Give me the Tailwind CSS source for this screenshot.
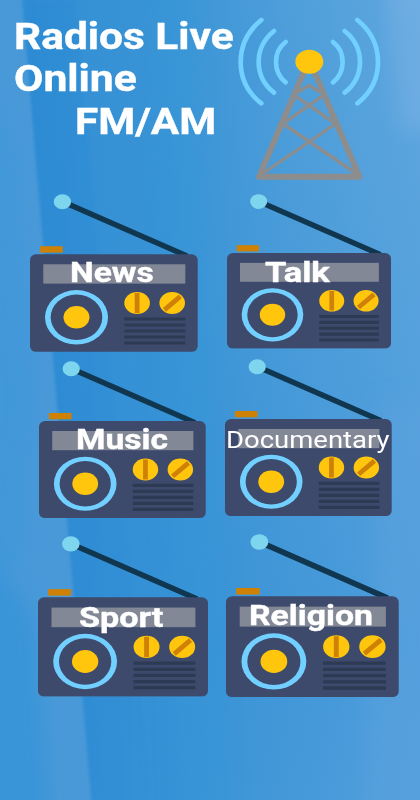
<!DOCTYPE html>
<html lang="en">
<head>
    <meta charset="UTF-8">
    <meta name="viewport" content="width=device-width, initial-scale=1.0">
    <title>Radios Live Online FM/AM</title>
    <script src="https://cdn.jsdelivr.net/npm/@tailwindcss/browser@4"></script>
</head>
<body class="font-['Roboto',sans-serif] bg-[#3f96d6] text-white">
    <div class="relative w-[420px] h-[800px] overflow-hidden">

        <!-- Painted background -->
        <svg class="absolute inset-0" width="420" height="800" viewBox="0 0 420 800" aria-hidden="true">
            <defs>
                <linearGradient id="base" x1="0" y1="0" x2="1" y2="0">
                    <stop offset="0" stop-color="#4b9bd9"/>
                    <stop offset=".07" stop-color="#338fd4"/>
                    <stop offset=".4" stop-color="#3a94d6"/>
                    <stop offset=".7" stop-color="#4f9fda"/>
                    <stop offset="1" stop-color="#60a7df"/>
                </linearGradient>
                <linearGradient id="low" x1="0" y1="0" x2="0" y2="1">
                    <stop offset="0" stop-color="#2e8bd4" stop-opacity="0"/>
                    <stop offset=".8" stop-color="#2e8bd4" stop-opacity=".4"/>
                    <stop offset="1" stop-color="#2e8bd4" stop-opacity=".3"/>
                </linearGradient>
                <linearGradient id="edge" x1="0" y1="0" x2="1" y2="0">
                    <stop offset="0" stop-color="#2487d3"/>
                    <stop offset="1" stop-color="#2487d3" stop-opacity="0"/>
                </linearGradient>
                <filter id="soft"><feGaussianBlur stdDeviation="10"/></filter>
                <filter id="fine"><feGaussianBlur stdDeviation="1.5"/></filter>
            </defs>
            <rect width="420" height="800" fill="url(#base)"/>
            <rect width="420" height="800" fill="url(#low)"/>
            <path d="M150 -20H190L235 820H175Z" fill="#3598d8" opacity=".35" filter="url(#soft)"/>
            <path d="M385 -20H440V130H400Z" fill="#76b0e3" opacity=".6" filter="url(#soft)"/>
            <path d="M380 400H440V820H360Z" fill="#5ca2de" opacity=".5" filter="url(#soft)"/>
            <path d="M20 0H75L150 800H92Z" fill="url(#edge)" opacity=".45" filter="url(#fine)"/>
            <path d="M-10 -10H21L92 810H-10Z" fill="#4899d8" filter="url(#fine)"/>
            <path d="M-20 60L14 150L34 400L20 560L-20 600Z" fill="#3f98da" opacity=".8" filter="url(#soft)"/>
            <path d="M-20 540L35 620L50 820H-20Z" fill="#3894d8" opacity=".9" filter="url(#soft)"/>
        </svg>

        <!-- Radio drawing shared by all six stations -->
        <svg class="hidden">
            <symbol id="radio" viewBox="0 0 168 158" preserveAspectRatio="none">
                <path d="M38 10L157 62" stroke="#10374f" stroke-width="5.4"/>
                <ellipse cx="32.4" cy="7.7" rx="8.7" ry="7.5" fill="#7dd5ee"/>
                <rect x="10" y="52.2" width="22.7" height="6.4" fill="#cf8106"/>
                <rect y="60.3" width="167.7" height="97.5" rx="6" ry="5.5" fill="#3d4a6c"/>
                <rect x="13.3" y="70.3" width="142" height="19.3" fill="#828896"/>
                <ellipse cx="46.5" cy="123.3" rx="31.5" ry="27.2" fill="#71d0ff"/>
                <ellipse cx="46.5" cy="123.3" rx="25.8" ry="22.8" fill="#3d4a6c"/>
                <ellipse cx="46.5" cy="123.3" rx="13" ry="11.2" fill="#ffc60d"/>
                <ellipse cx="107.1" cy="109" rx="12.8" ry="11" fill="#ffc60d"/>
                <ellipse cx="142.2" cy="109" rx="12.8" ry="11" fill="#ffc60d"/>
                <path d="M107.1 99V119M134.4 115.8L150.4 102.4" stroke="#cf8106" stroke-width="4.8"/>
                <path d="M94.3 125H155.3M94.3 131H155.3M94.3 137H155.3M94.3 143H155.3M94.3 149H155.3" stroke="#2d3a54" stroke-width="3.2"/>
            </symbol>
        </svg>

        <!-- Header -->
        <header class="relative flex h-[193.6px]">
            <h1 class="w-[236px] pt-[15.6px] pl-[14px] text-[36.6px] leading-[42.8px] font-bold whitespace-nowrap [-webkit-text-stroke:0.4px_white]">
                <span class="block w-max origin-left scale-x-[1.16]">Radios Live</span>
                <span class="block w-max origin-left scale-x-[1.165]">Online</span>
                <span class="block w-max origin-left scale-x-[1.155] ml-[60.8px]">FM/AM</span>
            </h1>
            <svg class="-ml-[6px]" width="190" height="190" viewBox="0 0 570 570" fill="none" aria-label="Antenna">
                <g stroke="#8d8d8d">
                    <path d="M222 215L87 530H388L253 215" stroke-width="18" stroke-linejoin="round"/>
                    <path d="M204 277L237 256L270 277M198 289L315 370M279 287L160 370M160 372L385 525M315 372L92 525" stroke-width="10"/>
                </g>
                <ellipse cx="238" cy="185" rx="42" ry="36" fill="#ffc60d"/>
                <g stroke="#71d0ff" stroke-width="14" stroke-linecap="round">
                    <path d="M167 126Q138 148 138 186T167 247"/>
                    <path d="M132 93Q86 130 86 186T132 278"/>
                    <path d="M94 60Q32 110 32 186T94 310"/>
                    <path d="M309 126Q338 148 338 186T309 247"/>
                    <path d="M344 93Q390 130 390 186T344 278"/>
                    <path d="M382 60Q444 110 444 186T382 310"/>
                </g>
            </svg>
        </header>

        <!-- Stations -->
        <main class="relative text-[28px] leading-none font-bold whitespace-nowrap [-webkit-text-stroke:0.4px_white]">
            <div class="flex items-start gap-[29.6px] h-[165.5px] pl-[29.6px]">
                <a class="relative w-[168px] h-[158px]">
                    <svg class="w-full h-full"><use href="#radio"/></svg>
                    <span class="absolute left-[40px] top-[65.4px] origin-left scale-x-[1.2]">News</span>
                </a>
                <a class="relative w-[164.3px] h-[154.8px] mt-[0.7px]">
                    <svg class="w-full h-full"><use href="#radio"/></svg>
                    <span class="absolute left-[37.5px] top-[65px] origin-left scale-x-[1.23]">Talk</span>
                </a>
            </div>
            <div class="flex items-start gap-[19.2px] h-[175px] pl-[38.5px]">
                <a class="relative w-[167px] h-[157.3px] mt-[2.4px]">
                    <svg class="w-full h-full"><use href="#radio"/></svg>
                    <span class="absolute left-[37px] top-[65px] origin-left scale-x-[1.2]">Music</span>
                </a>
                <a class="relative w-[167px] h-[157.3px]">
                    <svg class="w-full h-full"><use href="#radio"/></svg>
                    <span class="absolute left-[1px] top-[69px] text-[24px] font-normal origin-left scale-x-[1.145] [-webkit-text-stroke:0px]">Documentary</span>
                </a>
            </div>
            <div class="flex items-start gap-[18.2px] pl-[37.5px]">
                <a class="relative w-[170.3px] h-[160.8px] mt-[2.4px]">
                    <svg class="w-full h-full"><use href="#radio"/></svg>
                    <span class="absolute left-[41.5px] top-[67.3px] origin-left scale-x-[1.22]">Sport</span>
                </a>
                <a class="relative w-[173px] h-[163.3px]">
                    <svg class="w-full h-full"><use href="#radio"/></svg>
                    <span class="absolute left-[23px] top-[68.3px] origin-left scale-x-[1.205]">Religion</span>
                </a>
            </div>
        </main>
    </div>
</body>
</html>
